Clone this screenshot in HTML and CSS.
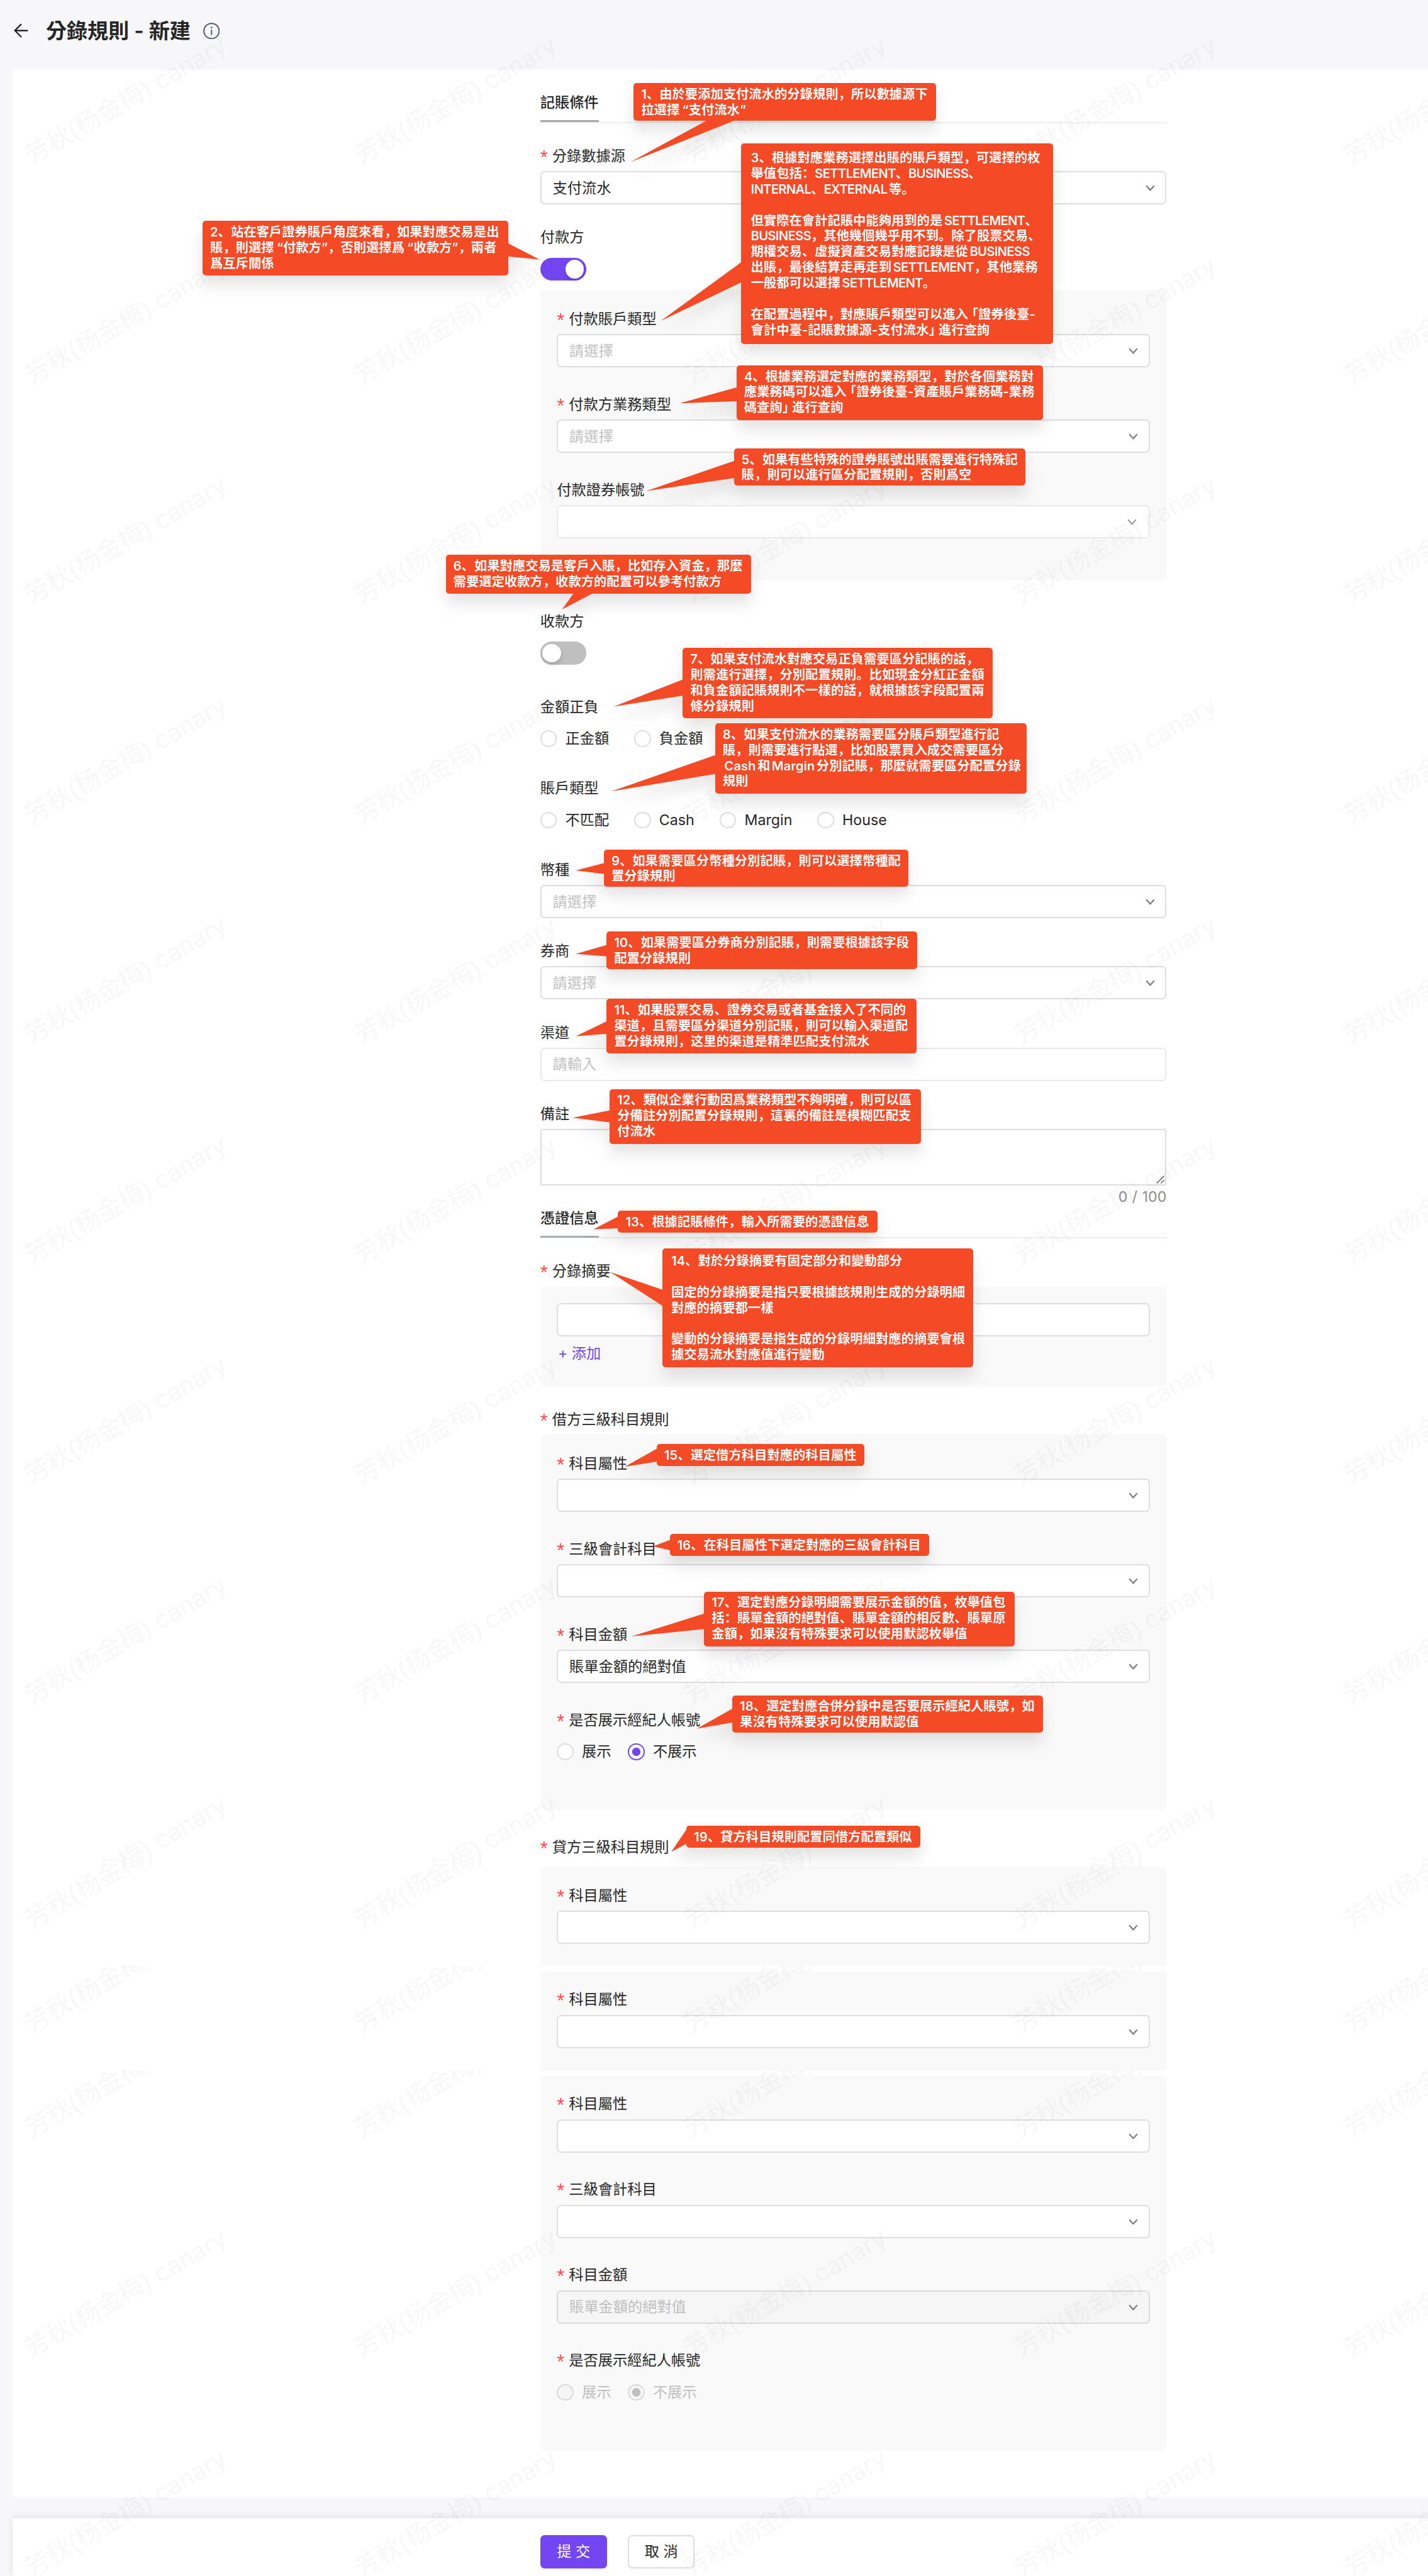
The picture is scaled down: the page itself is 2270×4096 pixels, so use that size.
FILE: index.html
```html
<!DOCTYPE html>
<html lang="zh-Hant">
<head>
<meta charset="utf-8">
<title>分錄規則 - 新建</title>
<link rel="stylesheet" href="styles.css">
</head>
<body>
<svg class="defs" aria-hidden="true">
  <symbol id="chevron" viewBox="0 0 18 12"><path d="M1.4 1.6 9 10 16.6 1.6" fill="none" stroke="currentColor" stroke-width="2.6"/></symbol>
</svg>
<div class="page">
  <header class="topbar">
    <svg class="back" viewBox="0 0 28 28"><path d="M27 14H2M14.5 1.5 2 14l12.500 12.500" fill="none" stroke="#111" stroke-width="2.500"/></svg>
    <h1 class="title">分錄規則 - 新建</h1>
    <svg class="info" viewBox="0 0 32 32"><circle cx="16" cy="16" r="14.600" fill="none" stroke="#4d5a6e" stroke-width="2.400"/><path d="M16 13.500v10" stroke="#4d5a6e" stroke-width="2.400"/><circle cx="16" cy="9.500" r="1.700" fill="#4d5a6e"/></svg>
  </header>

  <main class="panel">
    <form class="form">
      <h2 class="section"><span>記賬條件</span></h2>
      <div class="field"><label class="label req">分錄數據源</label><div class="select">支付流水<svg><use href="#chevron"/></svg></div></div>
      <div class="field tight"><label class="label">付款方</label><div class="control"><span class="switch on"></span></div></div>
      <div class="group payer">
        <div class="field"><label class="label req">付款賬戶類型</label><div class="select hint">請選擇<svg><use href="#chevron"/></svg></div></div>
        <div class="field"><label class="label req">付款方業務類型</label><div class="select hint">請選擇<svg><use href="#chevron"/></svg></div></div>
        <div class="field"><label class="label">付款證券帳號</label><div class="select light"><svg><use href="#chevron"/></svg></div></div>
      </div>
      <div class="field wide"><label class="label">收款方</label><div class="control"><span class="switch"></span></div></div>
      <div class="field"><label class="label">金額正負</label><div class="control radios"><span class="radio">正金額</span><span class="radio">負金額</span></div></div>
      <div class="field"><label class="label">賬戶類型</label><div class="control radios"><span class="radio">不匹配</span><span class="radio">Cash</span><span class="radio">Margin</span><span class="radio">House</span></div></div>
      <div class="field"><label class="label">幣種</label><div class="select hint">請選擇<svg><use href="#chevron"/></svg></div></div>
      <div class="field"><label class="label">券商</label><div class="select hint">請選擇<svg><use href="#chevron"/></svg></div></div>
      <div class="field"><label class="label">渠道</label><div class="select hint light">請輸入</div></div>
      <div class="field remark"><label class="label">備註</label>
        <div class="textarea"><svg viewBox="0 0 16 16"><path d="M1 15 15 1M9 15l6-6" stroke="#555" stroke-width="1.600"/></svg></div>
        <div class="count">0 / 100</div>
      </div>

      <h2 class="section second"><span>憑證信息</span></h2>
      <div class="field tight"><label class="label req">分錄摘要</label></div>
      <div class="group summary"><div class="select"></div><a class="add">+ 添加</a></div>

      <div class="field tight"><label class="label req">借方三級科目規則</label></div>
      <div class="group debit">
        <div class="field"><label class="label req">科目屬性</label><div class="select"><svg><use href="#chevron"/></svg></div></div>
        <div class="field"><label class="label req">三級會計科目</label><div class="select"><svg><use href="#chevron"/></svg></div></div>
        <div class="field"><label class="label req">科目金額</label><div class="select">賬單金額的絕對值<svg><use href="#chevron"/></svg></div></div>
        <div class="field"><label class="label req">是否展示經紀人帳號</label><div class="control radios close"><span class="radio">展示</span><span class="radio checked">不展示</span></div></div>
      </div>

      <div class="field credit-label"><label class="label req">貸方三級科目規則</label></div>
      <div class="group part"><div class="field"><label class="label req">科目屬性</label><div class="select"><svg><use href="#chevron"/></svg></div></div></div>
      <div class="group part"><div class="field"><label class="label req">科目屬性</label><div class="select"><svg><use href="#chevron"/></svg></div></div></div>
      <div class="group">
        <div class="field"><label class="label req">科目屬性</label><div class="select"><svg><use href="#chevron"/></svg></div></div>
        <div class="field"><label class="label req">三級會計科目</label><div class="select"><svg><use href="#chevron"/></svg></div></div>
        <div class="field"><label class="label req">科目金額</label><div class="select hint disabled">賬單金額的絕對值<svg><use href="#chevron"/></svg></div></div>
        <div class="field"><label class="label req">是否展示經紀人帳號</label><div class="control radios close off"><span class="radio">展示</span><span class="radio checked">不展示</span></div></div>
      </div>
    </form>
  </main>

  <footer class="footer">
    <button class="btn primary" type="button">提 交</button>
    <button class="btn" type="button">取 消</button>
  </footer>

  <svg class="watermark" viewBox="0 0 2736 4936" aria-hidden="true">
    <defs>
      <pattern id="wm" width="632" height="421.500" patternUnits="userSpaceOnUse"><text transform="translate(59 316) rotate(-30)">芳秋(杨金梅) <tspan class="latin">canary</tspan></text></pattern>
      <pattern id="wm2" href="#wm" patternTransform="translate(0 9)"/>
      <pattern id="wm3" href="#wm" patternTransform="translate(0 209)"/>
      <pattern id="wm4" href="#wm" patternTransform="translate(0 409)"/>
    </defs>
    <rect width="2736" height="3566" fill="url(#wm)"/>
    <rect y="3566" width="2736" height="201" fill="url(#wm2)"/>
    <rect y="3767" width="2736" height="200" fill="url(#wm3)"/>
    <rect y="3967" width="2736" height="969" fill="url(#wm4)"/>
  </svg>

  <div class="notes" lang="zh-Hans">
    <svg class="tails" viewBox="0 0 2736 4936">
      <path d="M1356 230h54L1207 311zM973 466v25.500L1034 497.500zM1421 502v39L1266 615zM1412 742v27L1302 773zM1407 883v33L1238 941zM1099 1137h37L1077 1168zM1309 1302v31L1176 1354zM1371 1447v36L1171.500 1516.500zM1158 1654v21L1103 1668zM1163 1811v22L1103 1828zM1163 1957v24L1103 1986zM1169 2128v23L1097 2142zM1185 2331v23L1137 2356zM1270 2472v31L1169 2437.500zM1259 2776v25L1197 2811zM1284 2951v20L1251 2963.500zM1350 3092v30L1210 3136zM1404 3274v27L1335 3313zM1316 3505v28L1286 3549z"/>
    </svg>
    <p class="note n1">1、由於要添加支付流水的分錄規則，所以數據源下<br>拉選擇<span class="q">“</span>支付流水”</p>
    <p class="note n2">2、站在客戶證券賬戶角度來看，如果對應交易是出<br>賬，則選擇<span class="q">“</span>付款方”，否則選擇爲<span class="q">“</span>收款方”，兩者<br>爲互斥關係</p>
    <p class="note n3">3、根據對應業務選擇出賬的賬戶類型，可選擇的枚<br>舉值包括：<span class="en">SETTLEMENT</span>、<span class="en">BUSINESS</span>、<br><span class="en">INTERNAL</span>、<span class="en">EXTERNAL</span>等。<br><br>但實際在會計記賬中能夠用到的是<span class="en">SETTLEMENT</span>、<br><span class="en">BUSINESS</span>，其他幾個幾乎用不到。除了股票交易、<br>期權交易、虛擬資產交易對應記錄是從<span class="en">BUSINESS</span><br>出賬，最後結算走再走到<span class="en">SETTLEMENT</span>，其他業務<br>一般都可以選擇<span class="en">SETTLEMENT</span>。<br><br>在配置過程中，對應賬戶類型可以進入<span class="open">「</span>證券後臺-<br>會計中臺-記賬數據源-支付流水<span class="shut">」</span>進行查詢</p>
    <p class="note n4">4、根據業務選定對應的業務類型，對於各個業務對<br>應業務碼可以進入<span class="open">「</span>證券後臺-資產賬戶業務碼-業務<br>碼查詢<span class="shut">」</span>進行查詢</p>
    <p class="note n5">5、如果有些特殊的證券賬號出賬需要進行特殊記<br>賬，則可以進行區分配置規則，否則爲空</p>
    <p class="note n6">6、如果對應交易是客戶入賬，比如存入資金，那麼<br>需要選定收款方，收款方的配置可以參考付款方</p>
    <p class="note n7">7、如果支付流水對應交易正負需要區分記賬的話，<br>則需進行選擇，分別配置規則。比如現金分紅正金額<br>和負金額記賬規則不一樣的話，就根據該字段配置兩<br>條分錄規則</p>
    <p class="note n8">8、如果支付流水的業務需要區分賬戶類型進行記<br>賬，則需要進行點選，比如股票買入成交需要區分<br><span class="lead">Cash</span>和Margin分別記賬，那麼就需要區分配置分錄<br>規則</p>
    <p class="note n9">9、如果需要區分幣種分別記賬，則可以選擇幣種配<br>置分錄規則</p>
    <p class="note n10">10、如果需要區分券商分別記賬，則需要根據該字段<br>配置分錄規則</p>
    <p class="note n11">11、如果股票交易、證券交易或者基金接入了不同的<br>渠道，且需要區分渠道分別記賬，則可以輸入渠道配<br>置分錄規則，这里的渠道是精準匹配支付流水</p>
    <p class="note n12">12、類似企業行動因爲業務類型不夠明確，則可以區<br>分備註分別配置分錄規則，這裏的備註是模糊匹配支<br>付流水</p>
    <p class="note n13">13、根據記賬條件，輸入所需要的憑證信息</p>
    <p class="note n14">14、對於分錄摘要有固定部分和變動部分<br><br>固定的分錄摘要是指只要根據該規則生成的分錄明細<br>對應的摘要都一樣<br><br>變動的分錄摘要是指生成的分錄明細對應的摘要會根<br>據交易流水對應值進行變動</p>
    <p class="note n15">15、選定借方科目對應的科目屬性</p>
    <p class="note n16">16、在科目屬性下選定對應的三級會計科目</p>
    <p class="note n17">17、選定對應分錄明細需要展示金額的值，枚舉值包<br>括：賬單金額的絕對值、賬單金額的相反數、賬單原<br>金額，如果沒有特殊要求可以使用默認枚舉值</p>
    <p class="note n18">18、選定對應合併分錄中是否要展示經紀人賬號，如<br>果沒有特殊要求可以使用默認值</p>
    <p class="note n19">19、貸方科目規則配置同借方配置類似</p>
  </div>
</div>
</body>
</html>
```

FILE: styles.css
```css
*, *::before { box-sizing: border-box; }
html { background: #f7f7fa; overflow: hidden; }
body { margin: 0; }
h1, h2, p { margin: 0; }

.defs { position: absolute; width: 0; height: 0; }

.page {
  zoom: 0.8297;
  position: relative;
  width: 2736px;
  height: 4937px;
  overflow: hidden;
  background: #f7f7fa;
  color: #262626;
  font: 400 28px/44px Inter, "Noto Sans CJK SC", sans-serif;
}

/* header */
.topbar { display: flex; align-items: center; height: 134px; padding: 0 0 16px 26px; }
.back { width: 28px; height: 28px; }
.title { margin: 0 24px 0 34px; font-size: 40px; line-height: 56px; font-weight: 600; white-space: pre; letter-spacing: -.2px; }
.info { width: 32px; height: 32px; }

/* form */
.panel { margin-left: 24px; height: 4652px; border-radius: 0 0 0 4px; background: #fff; }
.form { width: 1200px; margin-left: 1011px; padding-top: 40px; }
.section { height: 62px; margin-bottom: 40px; border-bottom: 2.500px solid #efeff1; font-size: 28px; line-height: 46px; font-weight: 500; }
.section span { display: inline-block; height: 60px; border-bottom: 4px solid #a8aab1; }
.field { margin-bottom: 40px; }
.field.tight { margin-bottom: 8px; }
.field.tight .label:last-child { margin-bottom: 0; }
.field.wide { margin-bottom: 48px; }
.label { display: block; height: 44px; margin-bottom: 8px; line-height: 46px; white-space: nowrap; }
.req::before { content: "*"; display: inline-block; width: 23px; color: #ff4d4f; font-family: "Liberation Sans", sans-serif; font-size: 37px; vertical-align: -6px; line-height: 1; height: 30px; }
.control { display: flex; align-items: center; height: 64px; }

.select {
  display: flex;
  align-items: center;
  justify-content: space-between;
  height: 64px;
  padding: 1px 20px 0 21.500px;
  border: 2.500px solid #dedede;
  border-radius: 8px;
  background: #fff;
}
.select svg { width: 18px; height: 12px; margin-left: auto; color: #7d7d7d; }
.select.hint { color: #bfbfbf; }
.select.light { border-color: #e9eaee; padding-right: 23px; }
.select.light svg { color: #a0a0a4; }
.select.disabled { background: #f5f5f5; border-color: #dadada; }

.switch { width: 88px; height: 44px; padding: 4px; border-radius: 22px; background: #bfbfbf; }
.switch::before { content: ""; display: block; width: 36px; height: 36px; border-radius: 50%; background: #fff; box-shadow: 0 4px 8px rgba(0, 35, 11, .2); }
.switch.on { background: #7446f2; }
.switch.on::before { margin-left: 44px; }

.radios { gap: 48px; }
.radios.close { gap: 32px; }
.radio { display: flex; align-items: center; gap: 16px; }
.radio::before { content: ""; width: 32px; height: 32px; border: 2.500px solid #dedede; border-radius: 50%; background: #fff; }
.radio.checked::before { border-color: #7446f2; background: radial-gradient(circle, #7446f2 7.500px, #fff 8.500px); }
.off { color: #bfbfbf; }
.off .radio::before { background: #f5f5f5; border-color: #dadada; }
.off .radio.checked::before { border-color: #dadada; background: radial-gradient(circle, #bfbfbf 7.500px, #f5f5f5 8.500px); }

.textarea { display: flex; align-items: flex-end; justify-content: flex-end; height: 108px; padding: 1px; border: 2.500px solid #dedede; border-radius: 4px; background: #fff; }
.textarea svg { width: 16px; height: 16px; }
.count { height: 40px; color: #8c8c8c; text-align: right; word-spacing: 1px; }
.field.remark { margin-bottom: 0; }

/* grey sub-groups */
.group { margin-bottom: 40px; padding: 32px 32px 80px; border-radius: 8px; background: #f9f9f9; }
.group .field { margin-bottom: 48px; }
.group .field:last-child { margin-bottom: 0; }
.group.payer { margin-bottom: 56px; }
.group.summary { height: 192px; padding-bottom: 0; }
.group.debit { margin-bottom: 48px; }
.group.part { margin-bottom: 10px; padding-bottom: 42px; border-radius: 8px 8px 0 0; }
.field.credit-label { margin-bottom: 16px; }
.credit-label .label { margin-bottom: 0; }
.add { display: block; margin-top: 11px; padding-left: 2px; color: #7446f2; }

/* footer */
.footer { display: flex; gap: 40px; height: 111px; margin: 40px 0 0 24px; padding: 32px 0 0 1011px; background: #fff; box-shadow: 0 -2px 12px rgba(30, 20, 80, .1); }
.btn { width: 128px; height: 64px; padding: 0; border: 2.500px solid #dedede; border-radius: 8px; background: #fff; color: #262626; font: inherit; box-shadow: 0 4px 0 rgba(0, 0, 0, .02); }
.btn.primary { border-color: #7446f2; background: #7446f2; color: #fff; }

.watermark { position: absolute; inset: 0 auto auto 0; width: 2736px; height: 4936px; }
.watermark text { font: 400 48px "Liberation Sans", "Noto Sans CJK SC", sans-serif; fill: rgba(0, 0, 0, .03); }
.watermark .latin { font-family: Inter, sans-serif; font-size: 47px; }

/* callouts laid over the form */
.notes { position: absolute; left: 0; top: 0; width: 2736px; height: 4936px; filter: drop-shadow(0 20px 14px rgba(0, 0, 0, .1)); }
.tails { position: absolute; left: 0; top: 0; width: 2736px; height: 4936px; fill: #f54a26; }
.note { position: absolute; padding: 7px 0 0 14.500px; border-radius: 6px; background: #f54a26; color: #fff; font-size: 24.500px; line-height: 30px; font-weight: 600; white-space: nowrap; text-autospace: normal; }
.lead { margin-left: 3px; }
.q { margin-left: 5px; }
.en { letter-spacing: -.9px; }
.open { margin-left: -5px; }
.shut { margin-right: -6px; }
.n1 { left: 1214px; top: 159px; width: 579px; height: 72px; }
.n2 { left: 388px; top: 423px; width: 586px; height: 105px; }
.n3 { left: 1420px; top: 275px; width: 598px; height: 384px; padding: 13px 0 0 18.500px; }
.n4 { left: 1411px; top: 700px; width: 587px; height: 105px; }
.n5 { left: 1406px; top: 859px; width: 558px; height: 72px; }
.n6 { left: 854px; top: 1063px; width: 585px; height: 75px; }
.n7 { left: 1308px; top: 1242px; width: 594px; height: 135px; }
.n8 { left: 1370px; top: 1386px; width: 597px; height: 135px; }
.n9 { left: 1157px; top: 1628px; width: 583px; height: 72px; }
.n10 { left: 1162px; top: 1785px; width: 595px; height: 72px; }
.n11 { left: 1162px; top: 1914px; width: 594px; height: 105px; }
.n12 { left: 1168px; top: 2087px; width: 596px; height: 105px; }
.n13 { left: 1184px; top: 2320px; width: 497px; height: 42px; }
.n14 { left: 1269px; top: 2392px; width: 596px; height: 228px; padding: 10px 0 0 17px; }
.n15 { left: 1258px; top: 2767px; width: 398px; height: 42px; }
.n16 { left: 1283px; top: 2940px; width: 497px; height: 42px; }
.n17 { left: 1349px; top: 3050px; width: 595px; height: 105px; }
.n18 { left: 1403px; top: 3249px; width: 595px; height: 72px; }
.n19 { left: 1315px; top: 3499px; width: 448px; height: 42px; }
```
